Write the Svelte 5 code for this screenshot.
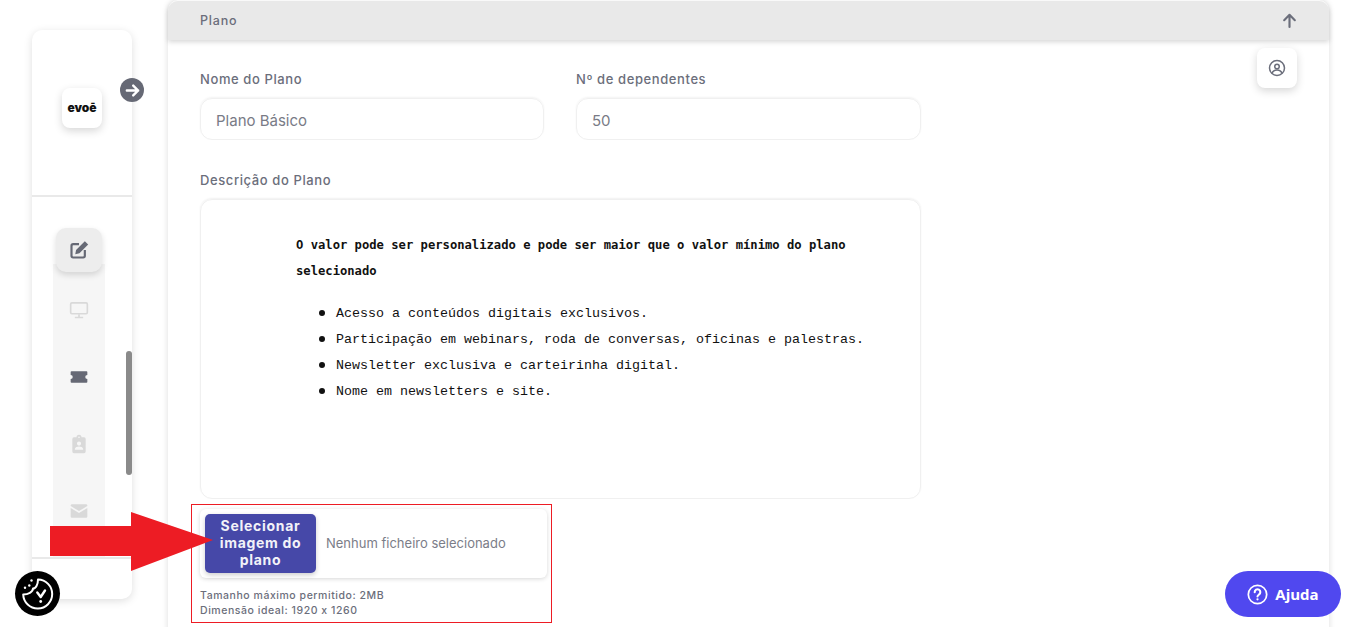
<script>
  const navItems = [
    { name: "edit", active: true },
    { name: "monitor" },
    { name: "ticket", dark: true },
    { name: "badge" },
    { name: "mail" }
  ];
  const benefits = [
    "Acesso a conteúdos digitais exclusivos.",
    "Participação em webinars, roda de conversas, oficinas e palestras.",
    "Newsletter exclusiva e carteirinha digital.",
    "Nome em newsletters e site."
  ];
</script>

<div class="page">
  <aside class="sidebar">
    <div class="brand">
      <div class="logo">evoē</div>
      <button class="collapse" aria-label="Expandir">
        <svg viewBox="0 0 24 24" width="17" height="17" fill="none" stroke="#fff" stroke-width="3.4" stroke-linecap="round" stroke-linejoin="round"><path d="M4 12h16M13 5l7 7-7 7" /></svg>
      </button>
    </div>
    <div class="nav-wrap">
      <nav class="nav">
        {#each navItems as item}
          <div class="nav-item" class:active={item.active} class:dark={item.dark}>
            {#if item.name === "edit"}
              <svg viewBox="0 0 24 24" width="20" height="20" fill="none" stroke="currentColor" stroke-width="2.6"><path d="M12 5H5a2 2 0 0 0-2 2v12a2 2 0 0 0 2 2h12a2 2 0 0 0 2-2v-7" /><path fill="currentColor" stroke="none" d="M19 1.500l4 4L12.500 16l-5 1 1-5z" /></svg>
            {:else if item.name === "monitor"}
              <svg viewBox="0 0 24 24" width="20" height="20" fill="none" stroke="currentColor" stroke-width="2"><rect x="2" y="3.500" width="20" height="13" rx="1.500" /><path d="M12 17v3M7 21h10" /></svg>
            {:else if item.name === "ticket"}
              <svg viewBox="0 0 24 24" width="20" height="20" fill="currentColor"><path d="M3 5h18a1 1 0 0 1 1 1v3.500a2.500 2.500 0 0 0 0 5V18a1 1 0 0 1-1 1H3a1 1 0 0 1-1-1v-3.500a2.500 2.500 0 0 0 0-5V6a1 1 0 0 1 1-1z" /></svg>
            {:else if item.name === "badge"}
              <svg viewBox="0 0 24 24" width="20" height="20" fill="currentColor"><path fill-rule="evenodd" d="M9 4a3 3 0 0 1 6 0h3a2 2 0 0 1 2 2v15a2 2 0 0 1-2 2H6a2 2 0 0 1-2-2V6a2 2 0 0 1 2-2zm3-1a1 1 0 1 0 0 2 1 1 0 0 0 0-2zm0 6a2.500 2.500 0 1 0 0 5 2.500 2.500 0 0 0 0-5zm-5 10h10v-1c0-2-3-3-5-3s-5 1-5 3z" /></svg>
            {:else}
              <svg viewBox="0 0 24 24" width="20" height="20" fill="currentColor"><path d="M2 5.500A1.500 1.500 0 0 1 3.500 4h17A1.500 1.500 0 0 1 22 5.500v.6l-10 6-10-6z" /><path d="M2 8.400l10 6 10-6v10.100a1.500 1.500 0 0 1-1.500 1.500h-17A1.500 1.500 0 0 1 2 18.500z" /></svg>
            {/if}
          </div>
        {/each}
      </nav>
      <div class="scrollbar"></div>
    </div>
    <div class="side-foot"></div>
  </aside>

  <main class="card">
    <header class="card-head">
      <span>Plano</span>
      <svg viewBox="0 0 24 24" width="17" height="17" fill="none" stroke="#6b6e7b" stroke-width="3" stroke-linecap="round" stroke-linejoin="round"><path d="M12 21V4M4.500 11.500L12 4l7.500 7.500" /></svg>
    </header>

    <section class="form">
      <div class="row">
        <div class="field">
          <span class="label">Nome do Plano</span>
          <div class="input">Plano Básico</div>
        </div>
        <div class="field">
          <span class="label">Nº de dependentes</span>
          <div class="input">50</div>
        </div>
      </div>

      <span class="label desc-label">Descrição do Plano</span>
      <div class="editor">
        <p class="lead">O valor pode ser personalizado e pode ser maior que o valor mínimo do plano selecionado</p>
        <ul>
          {#each benefits as b}
            <li>{b}</li>
          {/each}
        </ul>
      </div>

      <div class="file-box">
        <div class="file-input">
          <span class="file-btn">Selecionar imagem do plano</span>
          <span class="file-name">Nenhum ficheiro selecionado</span>
        </div>
        <p class="hint">Tamanho máximo permitido: 2MB<br />Dimensão ideal: 1920 x 1260</p>
      </div>
    </section>
  </main>

  <button class="user" aria-label="Perfil">
    <svg viewBox="0 0 24 24" width="18" height="18" fill="none" stroke="#6b6e7b" stroke-width="2"><circle cx="12" cy="12" r="10" /><circle cx="12" cy="10" r="3" /><path d="M5.500 19c1-3 3.500-4.200 6.500-4.200s5.500 1.200 6.500 4.200" /></svg>
  </button>

  <!-- red annotation arrow -->
  <svg class="red-arrow" width="164" height="60" viewBox="0 0 164 60"><path fill="#ed1c24" d="M0 14h81V0l82 28-82 31V44H0z" /></svg>

  <button class="cookie" aria-label="Cookies">
    <svg viewBox="0 0 45 45" width="45" height="45" fill="none" stroke="#fff" stroke-width="2" stroke-linecap="round" stroke-linejoin="round">
      <path d="M23 8.500A14.500 14.500 0 1 1 8.200 23.500C13 23.500 18 21 18 17.500C21 17.500 23 13 23 8.500z" />
      <path stroke-width="2.400" d="M22.300 21.500l3.400 4.500L30 19.500" />
      <circle cx="25.700" cy="30.500" r="1.400" fill="#fff" stroke="none" />
      <circle cx="10" cy="16.700" r="1.200" fill="#fff" stroke="none" />
      <circle cx="14.300" cy="14.500" r="1.200" fill="#fff" stroke="none" />
      <circle cx="16.500" cy="9.500" r="1.200" fill="#fff" stroke="none" />
    </svg>
  </button>

  <button class="help">
    <svg viewBox="0 0 24 24" width="21" height="21" fill="none" stroke="#fff" stroke-width="2" stroke-linecap="round"><circle cx="12" cy="12" r="10.500" /><path stroke-width="2.400" d="M8.800 9.300a3.200 3.200 0 1 1 4.900 2.700c-1 .7-1.700 1.200-1.700 2.300" /><circle cx="12" cy="17.500" r="1.300" fill="#fff" stroke="none" /></svg>
    Ajuda
  </button>
</div>

<style>
  :global(body) {
    margin: 0;
    background: #fff;
    overflow: hidden;
  }

  .page {
    position: relative;
    height: 627px;
    overflow: hidden;
    display: flex;
    align-items: flex-start;
    padding-left: 32px;
    gap: 36px;
    box-sizing: border-box;
    font-family: Inter, "Liberation Sans", sans-serif;
    font-feature-settings: "calt" 0;
    color: #6b6e7b;
  }

  button {
    border: 0;
    padding: 0;
    font: inherit;
  }

  .sidebar {
    position: relative;
    width: 100px;
    height: 569px;
    margin-top: 30px;
    flex: none;
    display: flex;
    flex-direction: column;
    background: #fff;
    border-radius: 10px;
    box-shadow: 0 2px 8px rgba(0, 0, 0, 0.13);
  }

  .brand {
    height: 107px;
    flex: none;
    border-bottom: 2px solid #e9e9e9;
    padding: 58px 0 0 30px;
  }

  .logo {
    width: 40px;
    height: 39px;
    padding-bottom: 1px;
    border-radius: 8px;
    background: #fff;
    box-shadow: 0 3px 8px rgba(0, 0, 0, 0.16);
    display: flex;
    align-items: center;
    justify-content: center;
    font: 900 12px Inter, sans-serif;
    color: #111;
  }

  .collapse {
    position: absolute;
    left: 88px;
    top: 48px;
    width: 24px;
    height: 24px;
    border-radius: 50%;
    background: #666975;
    display: flex;
    align-items: center;
    justify-content: center;
  }

  .nav-wrap {
    flex: 1;
    position: relative;
    overflow: hidden;
    border-bottom: 2px solid #e9e9e9;
    padding: 31px 0 0 21px;
  }

  .nav {
    width: 52px;
    height: 400px;
    background: linear-gradient(#f6f6f6, #f6f6f6) 0 36px no-repeat;
    display: flex;
    flex-direction: column;
    align-items: center;
  }

  .nav-item {
    width: 46px;
    height: 67px;
    flex: none;
    display: flex;
    align-items: center;
    justify-content: center;
    color: #d9d9d9;
    border-radius: 10px;
  }

  .nav-item.active {
    height: 44px;
    margin-bottom: 4px;
    background: #ededed;
    color: #666975;
    box-shadow: 0 3px 6px rgba(0, 0, 0, 0.14);
  }

  .nav-item.dark {
    color: #666975;
  }

  .scrollbar {
    position: absolute;
    right: 0;
    top: 154px;
    width: 6px;
    height: 124px;
    border-radius: 3px;
    background: #8a8a8a;
  }

  .side-foot {
    height: 40px;
    flex: none;
  }

  .card {
    width: 1161px;
    flex: none;
    height: 640px;
    background: #fff;
    border-radius: 10px 10px 0 0;
    box-shadow: 0 0 6px rgba(0, 0, 0, 0.14);
  }

  .card-head {
    height: 39px;
    margin-top: 1px;
    padding: 0 31px 0 32px;
    box-sizing: border-box;
    display: flex;
    align-items: center;
    justify-content: space-between;
    background: #e9e9e9;
    border-radius: 10px 10px 0 0;
    box-shadow: 0 2px 5px rgba(0, 0, 0, 0.16);
    font-size: 12.500px;
    font-weight: 500;
    letter-spacing: 0.8px;
  }

  .form {
    padding: 31px 32px 0;
  }

  .row {
    display: flex;
    gap: 32px;
  }

  .field {
    width: 344px;
  }

  .field + .field {
    width: 345px;
  }

  .label {
    display: block;
    font-size: 13px;
    line-height: 16px;
    font-weight: 500;
    letter-spacing: 0.6px;
  }

  .input {
    margin-top: 11px;
    height: 42px;
    box-sizing: border-box;
    padding: 2px 15px 0;
    display: flex;
    align-items: center;
    border-radius: 12px;
    border: 1px solid #f0f0f0;
    box-shadow: 0 -1px 2px rgba(0, 0, 0, 0.05);
    font-size: 15px;
    color: #797b86;
  }

  .desc-label {
    margin-top: 32px;
  }

  .editor {
    margin-top: 11px;
    width: 721px;
    height: 300px;
    box-sizing: border-box;
    padding: 32px 30px 0 95px;
    border: 1px solid #f0f0f0;
    border-radius: 12px;
    box-shadow: 0 -1px 2px rgba(0, 0, 0, 0.06);
    color: #111;
    font-family: "Liberation Mono", monospace;
    font-size: 13.330px;
    line-height: 26px;
  }

  .lead {
    margin: 0 0 17px;
    font-family: "DejaVu Sans Mono", monospace;
    font-weight: 700;
    font-size: 12.180px;
  }

  .editor ul {
    margin: 0;
    padding-left: 40px;
    list-style: none;
  }

  .editor li {
    position: relative;
  }

  .editor li::before {
    content: "";
    position: absolute;
    left: -17px;
    top: 9px;
    width: 6px;
    height: 6px;
    border-radius: 50%;
    background: #111;
  }

  .file-box {
    position: relative;
    margin: 5px 0 0 -9px;
    width: 361px;
    height: 119px;
    box-sizing: border-box;
    border: 1px solid #ed1c24;
    padding: 4px 4px 0 8px;
  }

  .file-input {
    height: 69px;
    width: 347px;
    box-sizing: border-box;
    padding: 5px;
    display: flex;
    align-items: center;
    gap: 10px;
    border-radius: 6px;
    box-shadow: 0 1px 4px rgba(0, 0, 0, 0.16);
  }

  .file-btn {
    width: 111px;
    height: 59px;
    flex: none;
    box-sizing: border-box;
    padding: 3px 0 5px;
    display: flex;
    align-items: center;
    text-align: center;
    background: #4648a8;
    color: #f2f2f8;
    border-radius: 5px;
    box-shadow: 0 2px 5px rgba(0, 0, 0, 0.2);
    font-size: 14px;
    line-height: 17px;
    font-weight: 700;
    letter-spacing: 0.7px;
  }

  .file-name {
    padding-bottom: 2px;
    font-size: 13px;
    color: #7b7d88;
  }

  .hint {
    margin: 10px 0 0;
    font-size: 10.500px;
    line-height: 15px;
    font-weight: 500;
    letter-spacing: 0.55px;
  }

  .user {
    position: absolute;
    left: 1257px;
    top: 48px;
    width: 40px;
    height: 40px;
    border-radius: 8px;
    background: #fff;
    box-shadow: 0 3px 8px rgba(0, 0, 0, 0.16);
    display: flex;
    align-items: center;
    justify-content: center;
  }

  .red-arrow {
    position: absolute;
    left: 50px;
    top: 512px;
  }

  .cookie {
    position: absolute;
    left: 15px;
    top: 571px;
    width: 45px;
    height: 45px;
    border-radius: 50%;
    background: #000;
    display: flex;
  }

  .help {
    position: absolute;
    left: 1225px;
    top: 571px;
    width: 116px;
    height: 46px;
    border-radius: 23px;
    background: #5048ef;
    color: #fff;
    font: 700 15px "Open Sans", sans-serif;
    display: flex;
    align-items: center;
    justify-content: center;
    gap: 7px;
  }
</style>
